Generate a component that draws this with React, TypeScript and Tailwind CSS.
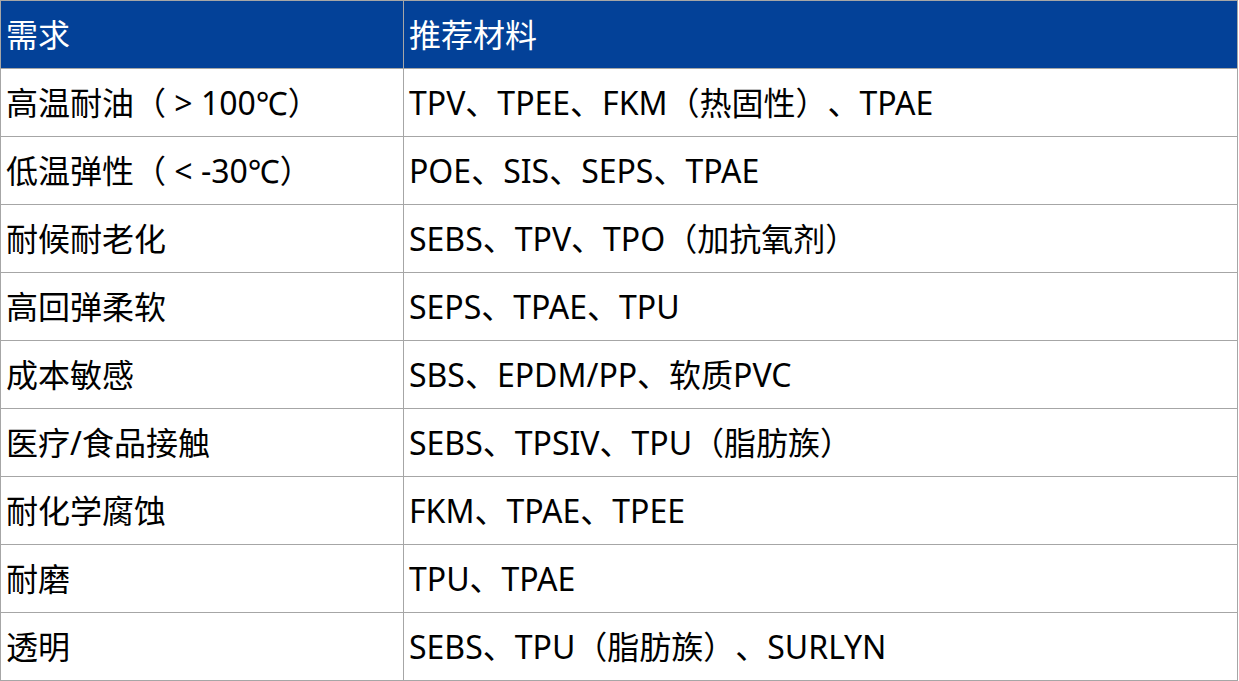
import React from "react";

const rows: [string, string][] = [
  ["高温耐油（ > 100℃）", "TPV、TPEE、FKM（热固性）、TPAE"],
  ["低温弹性（ < -30℃）", "POE、SIS、SEPS、TPAE"],
  ["耐候耐老化", "SEBS、TPV、TPO（加抗氧剂）"],
  ["高回弹柔软", "SEPS、TPAE、TPU"],
  ["成本敏感", "SBS、EPDM/PP、软质PVC"],
  ["医疗/食品接触", "SEBS、TPSIV、TPU（脂肪族）"],
  ["耐化学腐蚀", "FKM、TPAE、TPEE"],
  ["耐磨", "TPU、TPAE"],
  ["透明", "SEBS、TPU（脂肪族）、SURLYN"],
];

export default function App() {
  return (
    <div
      className="w-[1238px] bg-white border-l border-t border-[#a6a6a6] text-[32px] text-black [text-spacing-trim:space-all]"
      style={{ fontFamily: '"Noto Sans", "Noto Sans CJK SC", sans-serif' }}
    >
      <div className="grid grid-cols-[403px_834px] bg-[#034198] text-white">
        <div className="h-[68px] border-r border-b border-[#a6a6a6] flex items-center pl-[5px] whitespace-nowrap">需求</div>
        <div className="h-[68px] border-r border-b border-[#a6a6a6] flex items-center pl-[5px] whitespace-nowrap">推荐材料</div>
      </div>
      {rows.map(([a, b]) => (
        <div key={a} className="grid grid-cols-[403px_834px]">
          <div className="h-[68px] border-r border-b border-[#a6a6a6] flex items-center pl-[5px] whitespace-nowrap">{a}</div>
          <div className="h-[68px] border-r border-b border-[#a6a6a6] flex items-center pl-[5px] whitespace-nowrap">{b}</div>
        </div>
      ))}
    </div>
  );
}
